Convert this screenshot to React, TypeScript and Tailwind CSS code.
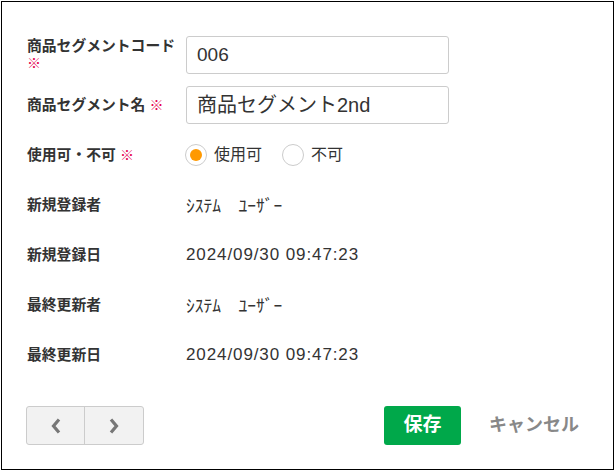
import React from "react";

const font = { fontFamily: '"Liberation Sans", "Noto Sans CJK JP", sans-serif' };

function Req() {
  return <span className="text-[#e5004f] font-normal text-[14px]">※</span>;
}

function Label({ children }: { children: React.ReactNode }) {
  return (
    <div className="w-[159px] shrink-0 pr-[10px] text-[14.8px] font-bold leading-[17px] text-[#333]">
      {children}
    </div>
  );
}

function Row({ label, children }: { label: React.ReactNode; children: React.ReactNode }) {
  return (
    <div className="flex h-[38px] items-center">
      <Label>{label}</Label>
      <div className="flex flex-1 items-center">{children}</div>
    </div>
  );
}

function Radio({ checked, label }: { checked?: boolean; label: string }) {
  return (
    <label className="flex items-center gap-[7px] mr-[20px]">
      <span className="flex h-[22px] w-[22px] items-center justify-center rounded-full border border-[#ccc] bg-white">
        {checked && <span className="h-[12px] w-[12px] rounded-full bg-[#ff9900]" />}
      </span>
      <span className="text-[16px] text-[#333]">{label}</span>
    </label>
  );
}

export default function App() {
  return (
    <div className="bg-white w-[616px] h-[472px] pt-[1px] pl-[1px]" style={font}>
      <div className="w-[613px] h-[469px] border border-black flex flex-col pl-[25px] pt-[34px] pr-[34px]">
        <div className="flex flex-col gap-[12px]">
          <Row
            label={
              <>
                商品セグメントコード
                <br />
                <Req />
              </>
            }
          >
            <div className="flex h-[38px] w-[263px] items-center rounded-[3px] border border-[#ccc] px-[10px] text-[19px] text-[#333]">
              006
            </div>
          </Row>
          <Row
            label={
              <>
                商品セグメント名 <Req />
              </>
            }
          >
            <div className="flex h-[38px] w-[263px] items-center rounded-[3px] border border-[#ccc] px-[10px] text-[20px] text-[#333]">
              商品セグメント2nd
            </div>
          </Row>
          <Row
            label={
              <>
                使用可・不可 <Req />
              </>
            }
          >
            <div className="-ml-px flex items-center">
              <Radio checked label="使用可" />
              <Radio label="不可" />
            </div>
          </Row>
          <Row label="新規登録者">
            <span className="text-[17.5px] text-[#333]" style={{ fontFamily: '"Noto Sans CJK JP", sans-serif' }}>
              ｼｽﾃﾑ　ﾕｰｻﾞｰ
            </span>
          </Row>
          <Row label="新規登録日">
            <span className="text-[17px] tracking-[0.9px] text-[#333]">2024/09/30 09:47:23</span>
          </Row>
          <Row label="最終更新者">
            <span className="text-[17.5px] text-[#333]" style={{ fontFamily: '"Noto Sans CJK JP", sans-serif' }}>
              ｼｽﾃﾑ　ﾕｰｻﾞｰ
            </span>
          </Row>
          <Row label="最終更新日">
            <span className="text-[17px] tracking-[0.9px] text-[#333]">2024/09/30 09:47:23</span>
          </Row>
        </div>
        <div className="mt-[32px] flex items-center">
          <div className="-ml-px flex h-[39px] overflow-hidden rounded-[3px] border border-[#ccc] bg-[#f2f2f2]">
            <button className="flex w-[58px] items-center justify-center border-r border-[#ccc]">
              <svg width="12" height="18" viewBox="0 0 12 18">
                <path d="M9 2.5 L3.5 9 L9 15.5" fill="none" stroke="#777" strokeWidth="3.2" />
              </svg>
            </button>
            <button className="flex w-[58px] items-center justify-center">
              <svg width="12" height="18" viewBox="0 0 12 18">
                <path d="M3 2.5 L8.5 9 L3 15.5" fill="none" stroke="#777" strokeWidth="3.2" />
              </svg>
            </button>
          </div>
          <div className="ml-auto flex items-center">
            <button className="flex h-[39px] w-[77px] items-center justify-center rounded-[3px] bg-[#00a84a] text-[19px] font-bold text-white">
              保存
            </button>
            <button className="ml-[28px] text-[18px] font-bold text-[#888]">キャンセル</button>
          </div>
        </div>
      </div>
    </div>
  );
}
